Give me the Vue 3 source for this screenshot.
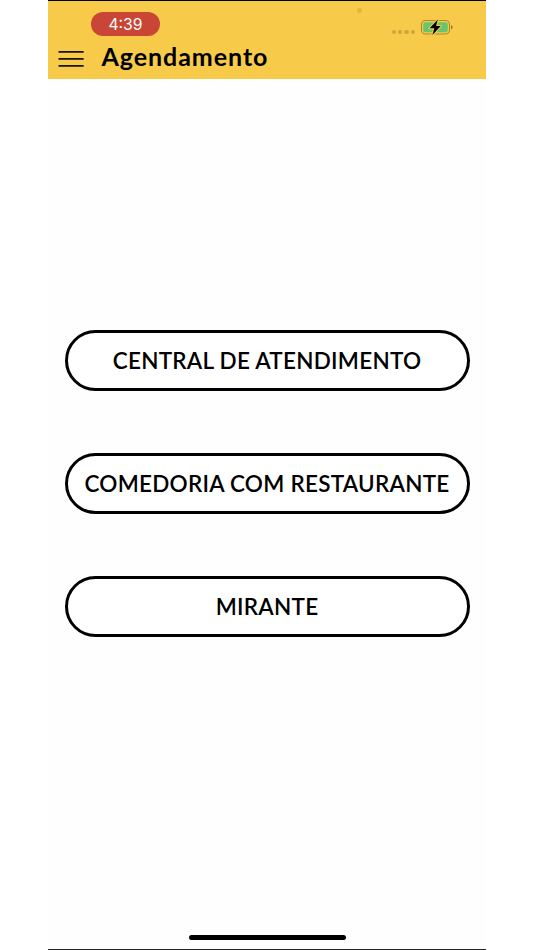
<template>
  <div class="screen">
    <header class="header">
      <div class="status-bar">
        <span class="clock">4:39</span>
        <span class="privacy-dot"></span>
        <div class="status-icons">
          <span class="signal"><i v-for="n in 4" :key="n"></i></span>
          <svg class="battery" width="33" height="18" viewBox="0 0 33 18">
            <rect x="1.5" y="2.5" width="28" height="13.5" rx="4" fill="none" stroke="#a98a37" stroke-width="1.1" />
            <rect x="3.2" y="4.2" width="24.6" height="10.1" rx="2.4" fill="#67c66b" />
            <path d="M31 7v4.500c1-.4 1.700-1.200 1.700-2.200S32 7.400 31 7z" fill="#9a7e32" />
            <path d="M17.800 1.500 9.600 10.300h4.700L12.400 17 20.800 8.100h-4.700z" fill="#000" stroke="#f7cb49" stroke-width="2.200" stroke-linejoin="round" paint-order="stroke" />
          </svg>
        </div>
      </div>
      <div class="title-bar">
        <button type="button" class="menu-button" aria-label="Menu">
          <svg width="26" height="18" viewBox="0 0 26 18">
            <path d="M1.300 1.900h23.600M1.300 8.900h23.600M1.300 15.900h23.600" stroke="#171307" stroke-width="1.900" stroke-linecap="round" />
          </svg>
        </button>
        <h1>Agendamento</h1>
      </div>
    </header>

    <main class="options">
      <button
        v-for="option in options"
        :key="option.key"
        type="button"
        class="option"
      >
        {{ option.label }}
      </button>
    </main>

    <footer class="home-area">
      <span class="home-indicator"></span>
    </footer>
  </div>
</template>

<script setup>
const options = [
  { key: 'central', label: 'CENTRAL DE ATENDIMENTO' },
  { key: 'comedoria', label: 'COMEDORIA COM RESTAURANTE' },
  { key: 'mirante', label: 'MIRANTE' }
]
</script>

<style>
body {
  margin: 0;
  background: #ffffff;
}
</style>

<style scoped>
.screen {
  box-sizing: border-box;
  width: 438px;
  height: 950px;
  margin-left: 48px;
  border-top: 1px solid #000000;
  border-bottom: 1px solid #222222;
  background: #fefefe;
  color: #000000;
  font-family: Lato, "Liberation Sans", sans-serif;
  display: flex;
  flex-direction: column;
}

.header {
  height: 78px;
  background: #f7cb49;
}

.status-bar {
  height: 40px;
  display: flex;
  align-items: flex-start;
}

.clock {
  width: 69px;
  height: 24px;
  margin: 11px 0 0 43px;
  border-radius: 12px;
  background: #c94536;
  color: #ffffff;
  font: 400 15.700px/26px Inter, "Liberation Sans", sans-serif;
  text-align: center;
}

.privacy-dot {
  width: 5px;
  height: 5px;
  margin: 7px 0 0 197px;
  border-radius: 50%;
  background: #deb642;
}

.status-icons {
  display: flex;
  margin: 17px 0 0 30px;
}

.signal {
  display: flex;
  gap: 2px;
  margin-top: 12px;
}

.signal i {
  width: 4.200px;
  height: 4.200px;
  border-radius: 50%;
  background: #cda63a;
}

.battery {
  display: block;
  margin-left: 5px;
}

.title-bar {
  display: flex;
  height: 38px;
}

.menu-button {
  width: 26px;
  height: 18px;
  margin: 9px 0 0 10px;
  padding: 0;
  border: 0;
  background: none;
}

.menu-button svg {
  display: block;
}

h1 {
  margin: 0 0 0 17.500px;
  font-size: 25px;
  line-height: 31px;
  font-weight: 700;
  letter-spacing: 0.950px;
}

.options {
  flex: 1;
  display: flex;
  flex-direction: column;
  align-items: center;
  gap: 61.600px;
  padding-top: 250.800px;
}

.option {
  box-sizing: border-box;
  width: 405px;
  height: 61.300px;
  border: 3px solid #000000;
  border-radius: 31px;
  background: #ffffff;
  padding: 0;
  color: #000000;
  font: 600 22.500px/27px Lato, "Liberation Sans", sans-serif;
  letter-spacing: 0.250px;
  white-space: nowrap;
}

.home-area {
  display: flex;
  justify-content: center;
  height: 14px;
}

.home-indicator {
  width: 157px;
  height: 5px;
  border-radius: 3px;
  background: #000000;
}
</style>
